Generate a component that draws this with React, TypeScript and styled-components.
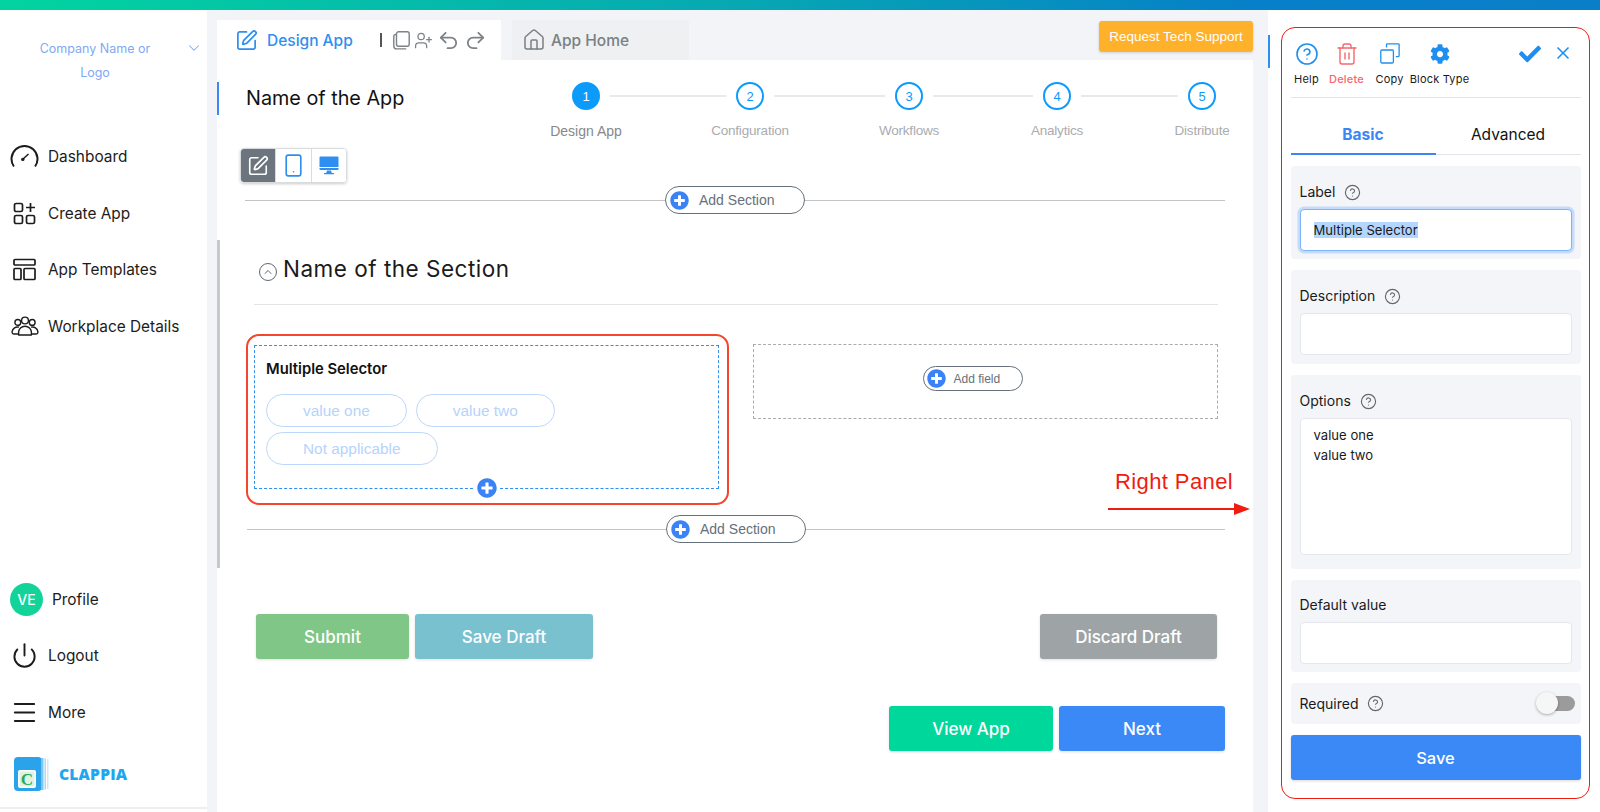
import React from "react";
import styled, { createGlobalStyle } from "styled-components";
import {
  ChevronDown,
  ChevronUp,
  CircleHelp,
  House,
  Menu,
  Power,
  Redo2,
  Smartphone,
  SquarePen,
  Trash2,
  Undo2,
  UserPlus,
  X,
} from "lucide-react";
import { FaCheck, FaCog, FaPlusCircle } from "react-icons/fa";

const GlobalStyle = createGlobalStyle`
  * { box-sizing: border-box; }
  html, body { margin: 0; height: 100%; overflow: hidden; background: #f3f4f8; }
  body { font-family: Inter, "Liberation Sans", sans-serif; color: #111; }
`;

const Shell = styled.div`
  height: 812px;
  display: flex;
  flex-direction: column;
`;

const TopBar = styled.div`
  height: 10px;
  flex: none;
  background: linear-gradient(90deg, #02d4a0 0%, #07a9b2 45%, #0680c8 78%, #0a7fc9 100%);
`;

const Body = styled.div`
  flex: 1;
  min-height: 0;
  display: flex;
`;

/* sidebar */
const Sidebar = styled.aside`
  width: 207px;
  flex: none;
  background: #fff;
  display: flex;
  flex-direction: column;
  padding-top: 27px;
  padding-bottom: 3px;
`;

const CompanyRow = styled.div`
  display: flex;
  padding-left: 20px;
  color: #7fa8f6;
`;

const CompanyName = styled.div`
  width: 150px;
  font-size: 12.5px;
  line-height: 24px;
  text-align: center;
`;

const CompanyCaret = styled.div`
  margin-left: 15px;
  margin-top: 2px;
`;

const NavList = styled.nav<{ $top?: number }>`
  margin-top: ${(p) => p.$top ?? 0}px;
`;

const NavItem = styled.div`
  height: 56.7px;
  display: flex;
  align-items: center;
  padding-left: 10px;
  gap: 9px;
  font-size: 15.4px;
  color: #1c1c1c;
`;

const NavIcon = styled.span`
  width: 29px;
  display: flex;
  justify-content: center;
  color: #1c1c1c;
`;

const Avatar = styled.span`
  width: 33px;
  height: 33px;
  border-radius: 50%;
  background: #12d39a;
  color: #fff;
  font-size: 14px;
  font-weight: 500;
  display: flex;
  align-items: center;
  justify-content: center;
`;

const SideBottom = styled.div`
  margin-top: auto;
`;

const LogoRow = styled.div`
  margin-top: 16px;
  padding: 0 0 16px 14px;
  border-bottom: 2px solid #eeeef2;
  display: flex;
  align-items: center;
  gap: 10px;
`;

const LogoText = styled.span`
  font-family: "Open Sans", "Liberation Sans", sans-serif;
  font-weight: 800;
  font-size: 15.6px;
  letter-spacing: 0.2px;
  color: #1ea6ee;
`;

/* main column */
const Main = styled.main`
  width: 1036px;
  margin-left: 10px;
  flex: none;
  padding-top: 10px;
  display: flex;
  flex-direction: column;
`;

const TabBar = styled.div`
  height: 40px;
  flex: none;
  display: flex;
  align-items: stretch;
`;

const DesignTab = styled.div`
  width: 284px;
  background: #fff;
  display: flex;
  align-items: center;
  padding-left: 18px;
  color: #2e8ff0;
  font-size: 15.5px;
  font-weight: 500;
`;

const TabLabel = styled.span`
  margin-left: 9px;
`;

const TabDivider = styled.span`
  width: 2px;
  height: 14px;
  background: #555;
  margin: 0 11px 0 27px;
`;

const TabTools = styled.div`
  display: flex;
  align-items: center;
  gap: 4px;
  color: #7d8287;
`;

const HomeTab = styled.div`
  width: 177px;
  margin-left: 11px;
  background: #eef0f2;
  display: flex;
  align-items: center;
  gap: 5px;
  padding-left: 10px;
  color: #7a7f84;
  font-size: 15.5px;
  font-weight: 500;
`;

const SupportButton = styled.button`
  margin: 1px 0 auto auto;
  width: 154px;
  height: 31px;
  border: 0;
  border-radius: 3px;
  background: #ffb12b;
  color: #fff;
  font-family: "Liberation Sans", sans-serif;
  font-size: 13.5px;
  box-shadow: 0 1px 3px rgba(0, 0, 0, 0.15);
`;

const Card = styled.section`
  flex: 1;
  background: #fff;
  position: relative;
  padding-top: 22px;
`;

const BlueMark = styled.span`
  position: absolute;
  left: 0;
  top: 22px;
  width: 2px;
  height: 33px;
  background: #3b89f6;
`;

const ScrollThumb = styled.span`
  position: absolute;
  left: 0;
  top: 180px;
  width: 3px;
  height: 328px;
  background: #c5c8ce;
`;

const Header = styled.div`
  display: flex;
  padding-left: 29px;
`;

const AppName = styled.h1`
  flex: 0 0 326px;
  margin: 2px 0 0;
  font-size: 19.8px;
  font-weight: 400;
  line-height: 28px;
  color: #111;
`;

const Stepper = styled.ol`
  display: flex;
  margin: 0;
  padding: 0;
  list-style: none;
`;

const Step = styled.li<{ $w: number }>`
  flex: 0 0 ${(p) => p.$w}px;
  display: flex;
  align-items: flex-start;
`;

const StepBullet = styled.div`
  width: 28px;
  flex: none;
  display: flex;
  flex-direction: column;
  align-items: center;
`;

const StepCircle = styled.span<{ $on?: boolean }>`
  width: 28px;
  height: 28px;
  flex: none;
  border-radius: 50%;
  border: 2px solid #0d9bfb;
  background: ${(p) => (p.$on ? "#0d9bfb" : "#fff")};
  color: ${(p) => (p.$on ? "#fff" : "#0d9bfb")};
  font-family: "Liberation Sans", sans-serif;
  font-size: 13px;
  display: flex;
  align-items: center;
  justify-content: center;
`;

const StepLabel = styled.span<{ $on?: boolean }>`
  margin-top: 12px;
  white-space: nowrap;
  font-family: "Liberation Sans", sans-serif;
  font-size: ${(p) => (p.$on ? 14 : 13.5)}px;
  line-height: 18px;
  letter-spacing: ${(p) => (p.$on ? 0 : -0.2)}px;
  color: ${(p) => (p.$on ? "#85888c" : "#aaacaf")};
`;

const StepLine = styled.span`
  flex: 1;
  height: 2px;
  margin: 13px 10px 0;
  background: #e8e9eb;
`;

const ViewSwitch = styled.div`
  width: 107px;
  height: 35px;
  margin: 8px 0 0 23px;
  display: flex;
  border: 1px solid #d9dbde;
  border-radius: 4px;
  box-shadow: 0 1px 3px rgba(0, 0, 0, 0.2);
  overflow: hidden;
`;

const ViewButton = styled.div<{ $on?: boolean }>`
  flex: 1;
  display: flex;
  align-items: center;
  justify-content: center;
  background: ${(p) => (p.$on ? "#6c757d" : "#fff")};
  color: ${(p) => (p.$on ? "#fff" : "#2e8ff0")};
  & + & {
    border-left: 1px solid #d9dbde;
  }
`;

const AddRow = styled.div<{ $left: number; $top: number }>`
  display: flex;
  align-items: center;
  margin-top: ${(p) => p.$top}px;
  padding: 0 28px 0 ${(p) => p.$left}px;
`;

const AddLine = styled.span`
  flex: 1;
  height: 1px;
  background: #c2c4c7;
`;

const AddPill = styled.div<{ $small?: boolean }>`
  width: ${(p) => (p.$small ? 100 : 140)}px;
  height: ${(p) => (p.$small ? 25 : 28)}px;
  border: 1px solid #66707a;
  border-radius: 14px;
  display: flex;
  align-items: center;
  gap: ${(p) => (p.$small ? 8 : 10)}px;
  padding-left: ${(p) => (p.$small ? 3 : 4)}px;
  font-family: "Liberation Sans", sans-serif;
  font-size: ${(p) => (p.$small ? 12 : 14)}px;
  color: #66707a;
  background: #fff;
`;

const PlusIcon = styled(FaPlusCircle)`
  color: #3b82f6;
  flex: none;
`;

const SectionHead = styled.div`
  margin: 40px 35px 0 37px;
  padding: 0 0 20px 5px;
  border-bottom: 1px solid #e3e4e6;
  display: flex;
  align-items: center;
  gap: 6px;
`;

const Collapse = styled.span`
  width: 18px;
  height: 18px;
  margin-top: 6px;
  border: 1.5px solid #5f6770;
  border-radius: 50%;
  color: #5f6770;
  display: flex;
  align-items: center;
  justify-content: center;
`;

const SectionTitle = styled.h2`
  margin: 0;
  font-size: 22.5px;
  font-weight: 400;
  line-height: 30px;
  color: #1a1a1a;
  letter-spacing: 0.5px;
`;

const FieldRow = styled.div`
  display: flex;
  align-items: flex-start;
  margin-top: 29px;
  padding-left: 29px;
`;

const Highlight = styled.div`
  width: 483px;
  padding: 8.5px 8.5px 14.5px 6px;
  border: 2px solid #f4452d;
  border-radius: 13px;
`;

const FieldBlock = styled.div`
  position: relative;
  height: 144px;
  padding: 13px 11px 0;
  border: 1px dashed #2e8ff0;
`;

const FieldTitle = styled.div`
  font-size: 14.8px;
  font-weight: 600;
  line-height: 20px;
  margin-bottom: 15px;
  color: #111;
`;

const Chips = styled.div`
  display: flex;
  flex-wrap: wrap;
  gap: 5px 9px;
`;

const Chip = styled.span`
  height: 33px;
  padding: 0 36px;
  border: 1px solid #bcd7fb;
  border-radius: 17px;
  font-family: "Liberation Sans", sans-serif;
  font-size: 15.4px;
  line-height: 31px;
  color: #b6d3fb;
`;

const BlockPlus = styled.span`
  position: absolute;
  left: 218px;
  bottom: -11px;
  width: 27px;
  height: 21px;
  background: #fff;
  display: flex;
  align-items: center;
  justify-content: center;
`;

const EmptySlot = styled.div`
  width: 465px;
  height: 75px;
  margin: 10px 0 0 24px;
  padding: 0 26px 6px 0;
  border: 1px dashed #a9abae;
  display: flex;
  align-items: center;
  justify-content: center;
`;

const ActionRow = styled.div<{ $top: number; $end?: boolean }>`
  display: flex;
  gap: 6px;
  margin-top: ${(p) => p.$top}px;
  padding: ${(p) => (p.$end ? "0 28px 0 0" : "0 36px 0 39px")};
  justify-content: ${(p) => (p.$end ? "flex-end" : "flex-start")};
`;

const ActionButton = styled.button<{ $bg: string; $w: number; $push?: boolean }>`
  width: ${(p) => p.$w}px;
  height: 45px;
  margin-left: ${(p) => (p.$push ? "auto" : 0)};
  border: 0;
  border-radius: 3px;
  background: ${(p) => p.$bg};
  color: #fff;
  font-family: Inter, sans-serif;
  font-size: 17px;
  font-weight: 500;
  box-shadow: 0 1px 3px rgba(0, 0, 0, 0.12);
`;

const PanelNote = styled.div`
  position: absolute;
  left: 898px;
  top: 409px;
  font-family: "Liberation Sans", sans-serif;
  font-size: 22px;
  letter-spacing: 0.4px;
  line-height: 26px;
  color: #f01c10;
`;

const PanelArrow = styled.svg`
  position: absolute;
  left: 891px;
  top: 441px;
`;

/* right rail */
const Rail = styled.aside`
  width: 332px;
  margin-left: 15px;
  flex: none;
  background: #fff;
  position: relative;
  padding: 17px 10px 14px 13px;
  &::before {
    content: "";
    position: absolute;
    left: 0;
    top: 25px;
    width: 2px;
    height: 33px;
    background: #2e8ff0;
  }
`;

const Panel = styled.div`
  height: 772px;
  padding: 14px 8.5px 0;
  border: 1.5px solid #f01c10;
  border-radius: 14px;
`;

const Toolbar = styled.div`
  display: flex;
  padding: 0 8px 11px 0;
  border-bottom: 1px solid #e3e5ea;
`;

const ToolGrid = styled.div`
  display: grid;
  grid-template-columns: 32px 48px 38px 62px;
`;

const Tool = styled.div<{ $danger?: boolean }>`
  display: flex;
  flex-direction: column;
  align-items: center;
  color: ${(p) => (p.$danger ? "#f4686c" : "#1f8fef")};
`;

const ToolIcon = styled.div`
  height: 23px;
  display: flex;
  align-items: center;
`;

const ToolLabel = styled.span<{ $danger?: boolean }>`
  margin-top: 7px;
  white-space: nowrap;
  font-size: 11px;
  line-height: 14px;
  letter-spacing: 0.2px;
  font-weight: ${(p) => (p.$danger ? 500 : 400)};
  color: ${(p) => (p.$danger ? "#f4686c" : "#1a1a1a")};
`;

const ToolActions = styled.div`
  margin-left: auto;
  display: flex;
  align-items: flex-start;
  gap: 12px;
  color: #1f8fef;
  padding-top: 1px;
`;

const PanelTabs = styled.div`
  display: flex;
  border-bottom: 1px solid #e3e5ea;
`;

const PanelTab = styled.div<{ $on?: boolean }>`
  flex: 1;
  padding: 27px 0 8px;
  margin-bottom: -1px;
  text-align: center;
  font-size: 15.5px;
  line-height: 20px;
  font-weight: ${(p) => (p.$on ? 700 : 400)};
  color: ${(p) => (p.$on ? "#3b86f3" : "#111")};
  border-bottom: 2px solid ${(p) => (p.$on ? "#3b86f3" : "transparent")};
`;

const Group = styled.div<{ $top?: number; $bottom?: number }>`
  margin-top: 11px;
  padding: ${(p) => p.$top ?? 17}px 9px ${(p) => p.$bottom ?? 9}px;
  background: #f4f5f9;
  border-radius: 4px;
`;

const FieldLabel = styled.div`
  display: flex;
  align-items: center;
  gap: 9px;
  font-size: 14px;
  line-height: 18px;
  margin-bottom: 8px;
  color: #1a1a1a;
`;

const HelpDot = styled(CircleHelp)`
  color: #62676c;
  flex: none;
`;

const InputBox = styled.div<{ $h: number; $focus?: boolean }>`
  height: ${(p) => p.$h}px;
  padding: ${(p) => (p.$focus ? "10px 13px" : "6px 13px")};
  background: #fff;
  border-radius: 4px;
  border: 1px solid #e6e7ec;
  font-size: 13.1px;
  line-height: 20px;
  color: #1a1a1a;
  ${(p) =>
    p.$focus &&
    `
    border: 1.5px solid #7fb2f8;
    box-shadow: 0 0 0 2.5px #c4dcfb;
  `}
`;

const Selected = styled.span`
  background: #b4d5fe;
`;

const ToggleRow = styled.div`
  height: 41px;
  margin-top: 11px;
  padding: 0 6px 0 9px;
  background: #f4f5f9;
  border-radius: 4px;
  display: flex;
  align-items: center;
  gap: 9px;
  font-size: 14px;
  color: #1a1a1a;
`;

const Toggle = styled.span`
  position: relative;
  width: 33px;
  height: 15px;
  margin-left: auto;
  border-radius: 8px;
  background: #9b9b9b;
  &::after {
    content: "";
    position: absolute;
    left: -6px;
    top: -4px;
    width: 22px;
    height: 22px;
    border-radius: 50%;
    background: #f6f6f6;
    box-shadow: 0 1px 3px rgba(0, 0, 0, 0.3);
  }
`;

const SaveButton = styled.button`
  width: 100%;
  height: 45px;
  margin-top: 11px;
  border: 0;
  border-radius: 3px;
  background: #3b89f6;
  color: #fff;
  font-family: Inter, sans-serif;
  font-size: 16.5px;
  font-weight: 500;
  box-shadow: 0 1px 3px rgba(0, 0, 0, 0.15);
`;

const GaugeIcon = () => (
  <svg width="29" height="24" viewBox="0 0 29 24" fill="none" stroke="#1c1c1c" strokeWidth="2">
    <path d="M3.9 22.5A13 13 0 1 1 25.1 22.5" />
    <path d="M13 15 18.5 10" strokeWidth="1.5" />
    <circle cx="12.8" cy="15.4" r="1.7" fill="#1c1c1c" stroke="none" />
  </svg>
);

const CreateIcon = () => (
  <svg width="23" height="23" viewBox="0 0 23 23" fill="none" stroke="#1c1c1c" strokeWidth="1.7">
    <rect x="1.5" y="1.5" width="8" height="8" rx="1.6" />
    <rect x="1.5" y="13.5" width="8" height="8" rx="1.6" />
    <rect x="13.5" y="13.5" width="8" height="8" rx="1.6" />
    <path d="M17.5 1v9M13 5.5h9" />
  </svg>
);

const TemplateIcon = () => (
  <svg width="23" height="23" viewBox="0 0 23 23" fill="none" stroke="#1c1c1c" strokeWidth="1.7">
    <rect x="1" y="1.5" width="21" height="5.5" rx="1" />
    <rect x="1" y="10.5" width="7" height="11" rx="1" />
    <rect x="11" y="10.5" width="11" height="11" rx="1" />
  </svg>
);

const PeopleIcon = () => (
  <svg width="28" height="20" viewBox="0 0 28 20" fill="none" stroke="#1c1c1c" strokeWidth="1.4" strokeLinejoin="round">
    <circle cx="14" cy="4.5" r="3.4" />
    <circle cx="6.8" cy="6.4" r="2.9" />
    <circle cx="21.2" cy="6.4" r="2.9" />
    <path d="M7.6 19v-2.4a6.4 6.4 0 0 1 12.8 0V19Z" />
    <path d="M8 11.2a5.4 5.4 0 0 0-6.9 4.4c-.2 1.6.6 2.4 2 2.4h4.5" />
    <path d="M20 11.2a5.4 5.4 0 0 1 6.9 4.4c.2 1.6-.6 2.4-2 2.4h-4.5" />
  </svg>
);

const LogoMark = () => (
  <svg width="35" height="34" viewBox="0 0 35 34">
    <rect x="0" y="0" width="28" height="34" rx="4" fill="#2ba3ea" />
    <rect x="27" y="1" width="2.5" height="32" fill="#7cc6f3" />
    <rect x="30.5" y="1.5" width="1.5" height="31" fill="#a9daf7" />
    <rect x="33" y="2" width="1.5" height="30" fill="#cfe9fa" />
    <rect x="4" y="13" width="18" height="18" rx="2" fill="#fff" />
    <rect x="5.5" y="14.5" width="15" height="15" rx="1" fill="#dff3e4" />
    <text x="13" y="27.5" textAnchor="middle" fontFamily="Liberation Serif, serif" fontWeight="700" fontSize="17" fill="#26ad57">
      C
    </text>
  </svg>
);

const PagesIcon = () => (
  <svg width="17" height="19" viewBox="0 0 17 19" fill="none" stroke="#7d8287" strokeWidth="1.4">
    <rect x="3.5" y="0.8" width="12.7" height="14.5" rx="2" />
    <path d="M3.5 3.5H2.6a1.8 1.8 0 0 0-1.8 1.8v9.6a3 3 0 0 0 3 3h9.4" />
  </svg>
);

const DesktopIcon = () => (
  <svg width="20" height="19" viewBox="0 0 20 19" fill="#2e8ff0">
    <path d="M1.5 0.5h17a1 1 0 0 1 1 1V11H0.5V1.5a1 1 0 0 1 1-1Z" />
    <path d="M0.5 12h19v1a1 1 0 0 1-1 1h-17a1 1 0 0 1-1-1Z" />
    <path d="M8 14.5h4l.8 2.5H15v1.2H5V17h2.2Z" />
  </svg>
);

const CopyIcon = () => (
  <svg width="20" height="21" viewBox="0 0 20 21" fill="none" stroke="#1f8fef" strokeWidth="1.3">
    <rect x="0.8" y="7" width="12.6" height="13" rx="1.2" />
    <path d="M6.5 4.5V1.6a.8.8 0 0 1 .8-.8h11a.8.8 0 0 1 .8.8v11.2a.8.8 0 0 1-.8.8H15.8" />
  </svg>
);

const steps = [
  { label: "Design App", w: 164 },
  { label: "Configuration", w: 159 },
  { label: "Workflows", w: 148 },
  { label: "Analytics", w: 145 },
  { label: "Distribute", w: 28 },
];

const AddSection: React.FC<{ left: number; top: number }> = ({ left, top }) => (
  <AddRow $left={left} $top={top}>
    <AddLine />
    <AddPill>
      <PlusIcon size={19} /> Add Section
    </AddPill>
    <AddLine />
  </AddRow>
);

const App: React.FC = () => {
  return (
    <Shell>
      <GlobalStyle />
      <TopBar />
      <Body>
        <Sidebar>
          <CompanyRow>
            <CompanyName>
              Company Name or
              <br />
              Logo
            </CompanyName>
            <CompanyCaret>
              <ChevronDown size={18} strokeWidth={1.4} />
            </CompanyCaret>
          </CompanyRow>
          <NavList $top={43}>
            <NavItem>
              <NavIcon>
                <GaugeIcon />
              </NavIcon>
              Dashboard
            </NavItem>
            <NavItem>
              <NavIcon>
                <CreateIcon />
              </NavIcon>
              Create App
            </NavItem>
            <NavItem>
              <NavIcon>
                <TemplateIcon />
              </NavIcon>
              App Templates
            </NavItem>
            <NavItem>
              <NavIcon>
                <PeopleIcon />
              </NavIcon>
              Workplace Details
            </NavItem>
          </NavList>
          <SideBottom>
            <NavItem>
              <Avatar>VE</Avatar>
              Profile
            </NavItem>
            <NavItem>
              <NavIcon>
                <Power size={27} strokeWidth={1.7} />
              </NavIcon>
              Logout
            </NavItem>
            <NavItem>
              <NavIcon>
                <Menu size={29} strokeWidth={1.6} />
              </NavIcon>
              More
            </NavItem>
            <LogoRow>
              <LogoMark />
              <LogoText>CLAPPIA</LogoText>
            </LogoRow>
          </SideBottom>
        </Sidebar>

        <Main>
          <TabBar>
            <DesignTab>
              <SquarePen size={23} strokeWidth={1.8} />
              <TabLabel>Design App</TabLabel>
              <TabDivider />
              <TabTools>
                <PagesIcon />
                <UserPlus size={19} strokeWidth={1.6} />
                <Undo2 size={23} strokeWidth={1.9} />
                <Redo2 size={23} strokeWidth={1.9} />
              </TabTools>
            </DesignTab>
            <HomeTab>
              <House size={24} strokeWidth={1.5} />
              App Home
            </HomeTab>
            <SupportButton>Request Tech Support</SupportButton>
          </TabBar>

          <Card>
            <BlueMark />
            <ScrollThumb />
            <Header>
              <AppName>Name of the App</AppName>
              <Stepper>
                {steps.map((s, i) => (
                  <Step key={s.label} $w={s.w}>
                    <StepBullet>
                      <StepCircle $on={i === 0}>{i + 1}</StepCircle>
                      <StepLabel $on={i === 0}>{s.label}</StepLabel>
                    </StepBullet>
                    {i < steps.length - 1 && <StepLine />}
                  </Step>
                ))}
              </Stepper>
            </Header>

            <ViewSwitch>
              <ViewButton $on>
                <SquarePen size={22} strokeWidth={1.8} />
              </ViewButton>
              <ViewButton>
                <Smartphone size={25} strokeWidth={1.6} />
              </ViewButton>
              <ViewButton>
                <DesktopIcon />
              </ViewButton>
            </ViewSwitch>

            <AddSection left={28} top={3} />

            <SectionHead>
              <Collapse>
                <ChevronUp size={12} strokeWidth={2} />
              </Collapse>
              <SectionTitle>Name of the Section</SectionTitle>
            </SectionHead>

            <FieldRow>
              <Highlight>
                <FieldBlock>
                  <FieldTitle>Multiple Selector</FieldTitle>
                  <Chips>
                    <Chip>value one</Chip>
                    <Chip>value two</Chip>
                    <Chip>Not applicable</Chip>
                  </Chips>
                  <BlockPlus>
                    <PlusIcon size={20} />
                  </BlockPlus>
                </FieldBlock>
              </Highlight>
              <EmptySlot>
                <AddPill $small>
                  <PlusIcon size={19} /> Add field
                </AddPill>
              </EmptySlot>
            </FieldRow>

            <AddSection left={30} top={10} />

            <ActionRow $top={71}>
              <ActionButton $bg="#7fc687" $w={153}>
                Submit
              </ActionButton>
              <ActionButton $bg="#79c1cf" $w={178}>
                Save Draft
              </ActionButton>
              <ActionButton $bg="#9ea3a6" $w={177} $push>
                Discard Draft
              </ActionButton>
            </ActionRow>
            <ActionRow $top={47} $end>
              <ActionButton $bg="#00d79b" $w={164}>
                View App
              </ActionButton>
              <ActionButton $bg="#3b89f6" $w={166}>
                Next
              </ActionButton>
            </ActionRow>

            <PanelNote>Right Panel</PanelNote>
            <PanelArrow width="142" height="16" viewBox="0 0 142 16">
              <path d="M0 8h128" stroke="#f01c10" strokeWidth="2" />
              <path d="M126 2l16 6-16 6Z" fill="#f01c10" />
            </PanelArrow>
          </Card>
        </Main>

        <Rail>
          <Panel>
            <Toolbar>
              <ToolGrid>
                <Tool>
                  <ToolIcon>
                    <CircleHelp size={24} strokeWidth={1.6} />
                  </ToolIcon>
                  <ToolLabel>Help</ToolLabel>
                </Tool>
                <Tool $danger>
                  <ToolIcon>
                    <Trash2 size={24} strokeWidth={1.4} />
                  </ToolIcon>
                  <ToolLabel $danger>Delete</ToolLabel>
                </Tool>
                <Tool>
                  <ToolIcon>
                    <CopyIcon />
                  </ToolIcon>
                  <ToolLabel>Copy</ToolLabel>
                </Tool>
                <Tool>
                  <ToolIcon>
                    <FaCog size={20} />
                  </ToolIcon>
                  <ToolLabel>Block Type</ToolLabel>
                </Tool>
              </ToolGrid>
              <ToolActions>
                <FaCheck size={22} />
                <X size={20} strokeWidth={2} />
              </ToolActions>
            </Toolbar>

            <PanelTabs>
              <PanelTab $on>Basic</PanelTab>
              <PanelTab>Advanced</PanelTab>
            </PanelTabs>

            <Group $bottom={8}>
              <FieldLabel>
                Label <HelpDot size={17} strokeWidth={1.6} />
              </FieldLabel>
              <InputBox $h={42} $focus>
                <Selected>Multiple Selector</Selected>
              </InputBox>
            </Group>

            <Group>
              <FieldLabel>
                Description <HelpDot size={17} strokeWidth={1.6} />
              </FieldLabel>
              <InputBox $h={42} />
            </Group>

            <Group $bottom={14}>
              <FieldLabel>
                Options <HelpDot size={17} strokeWidth={1.6} />
              </FieldLabel>
              <InputBox $h={137}>
                value one
                <br />
                value two
              </InputBox>
            </Group>

            <Group $top={16} $bottom={8}>
              <FieldLabel>Default value</FieldLabel>
              <InputBox $h={42} />
            </Group>

            <ToggleRow>
              Required <HelpDot size={17} strokeWidth={1.6} />
              <Toggle />
            </ToggleRow>

            <SaveButton>Save</SaveButton>
          </Panel>
        </Rail>
      </Body>
    </Shell>
  );
};

export default App;
